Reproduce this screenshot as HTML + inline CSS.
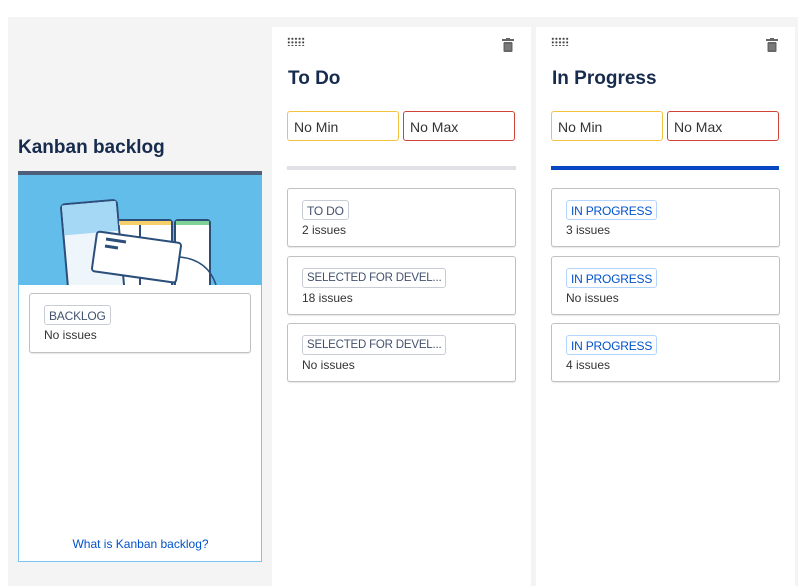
<!DOCTYPE html><html><head><style>
*{box-sizing:border-box;margin:0;padding:0}
body{width:798px;height:586px;background:#fff;font-family:"Liberation Sans",sans-serif;position:relative;overflow:hidden;color:#172b4d}
.a{position:absolute}
.gray{left:8px;top:17px;width:790px;height:569px;background:#f4f4f4}
.col{background:#fff;top:27px;height:559px;width:259px}
h2{position:absolute;font-size:19px;font-weight:bold;color:#172b4d}
.inp{position:absolute;top:111px;width:112px;height:30px;border:1px solid;border-radius:3px;font-size:14px;padding:7px 6px;color:#333}
.card{position:absolute;left:15px;width:229px;height:59px;border:1px solid #c1c1c1;border-radius:3px;box-shadow:0 1px 1px rgba(0,0,0,.1);background:#fff}
.lz{position:absolute;left:14px;top:11px;height:20px;border:1px solid #c8ccd4;border-radius:3px;font-size:12px;padding:3px 4px;color:#42526e;white-space:nowrap;letter-spacing:-.2px}
.lz.b{color:#0052cc;border-color:#b3d4ff}
.ct{position:absolute;left:14px;top:34px;font-size:12px;color:#333}
.grip{position:absolute;left:15px;top:10px;width:18px;height:9px;background-image:radial-gradient(circle,#444 1px,transparent 1.2px);background-size:3.6px 3.6px}
</style></head><body>
<div class="a gray"></div>
<h2 style="left:18px;top:137px">Kanban backlog</h2>
<div class="a" style="left:18px;top:171px;width:244px;height:391px;border:1px solid #7cc3ee;border-top:none;background:#fff">
 <div class="a" style="left:-1px;top:0;width:244px;height:4px;background:#505f79"></div>
 <div class="a" style="left:-1px;top:4px;width:244px;height:110px;background:#62bdea;overflow:hidden">
  <svg width="244" height="110" viewBox="0 0 244 110">
   <g stroke="#2b4f7a" stroke-width="2" fill="#fff">
    <rect x="100" y="45" width="30" height="80" rx="3"/><rect x="122" y="45" width="32" height="80" rx="3"/><rect x="157" y="45" width="35" height="80" rx="3"/>
    <rect x="47" y="27" width="56" height="100" rx="4" transform="rotate(-5 75 77)" fill="#eef6fc"/>
   </g>
   <rect x="101" y="46" width="28" height="4" fill="#f6cf6a"/><rect x="123" y="46" width="30" height="4" fill="#f6cf6a"/><rect x="158" y="46" width="33" height="4" fill="#7fd296"/>
   <rect x="48" y="28" width="54" height="30" fill="#a5d8f5" transform="rotate(-5 75 77)"/>
   <rect x="76" y="62" width="85" height="40" rx="3" fill="#fff" stroke="#2b4f7a" stroke-width="2" transform="rotate(8 118 82)"/>
   <path d="M88 64 L108 67 M87 71 L100 73" stroke="#2b4f7a" stroke-width="3"/>
   <path d="M162 82 Q190 85 198 110" stroke="#2b4f7a" stroke-width="1.5" fill="none"/>
  </svg>
 </div>
 <div class="card" style="left:10px;top:122px;width:222px;height:60px"><div class="lz">BACKLOG</div><div class="ct">No issues</div></div>
 <div class="a" style="left:0;width:243px;top:366px;text-align:center;font-size:12px;color:#0052cc">What is Kanban backlog?</div>
</div>

<div class="a col" style="left:272px">
 <div class="grip"></div>
 <svg class="a" style="left:230px;top:11px" width="12" height="14" viewBox="0 0 12 14"><rect x="0" y="1" width="12" height="2" fill="#666"/><rect x="4" y="0" width="4" height="2" fill="#666"/><rect x="1.5" y="4" width="9" height="10" rx="1" fill="#666"/><path d="M4 6v6M6 6v6M8 6v6" stroke="#999" stroke-width=".8"/></svg>
</div>
<h2 style="left:288px;top:68px">To Do</h2>
<div class="inp" style="left:287px;border-color:#f5c342">No Min</div>
<div class="inp" style="left:403px;border-color:#d04437">No Max</div>
<div class="a" style="left:287px;top:166px;width:229px;height:4px;background:#dfe1e6"></div>
<div class="a" style="left:272px;top:0">
 <div class="card" style="top:188px"><div class="lz">TO DO</div><div class="ct">2 issues</div></div>
 <div class="card" style="top:256px"><div class="lz" style="font-size:11.5px">SELECTED FOR DEVEL...</div><div class="ct">18 issues</div></div>
 <div class="card" style="top:323px"><div class="lz" style="font-size:11.5px">SELECTED FOR DEVEL...</div><div class="ct">No issues</div></div>
</div>

<div class="a col" style="left:536px">
 <div class="grip"></div>
 <svg class="a" style="left:230px;top:11px" width="12" height="14" viewBox="0 0 12 14"><rect x="0" y="1" width="12" height="2" fill="#666"/><rect x="4" y="0" width="4" height="2" fill="#666"/><rect x="1.5" y="4" width="9" height="10" rx="1" fill="#666"/><path d="M4 6v6M6 6v6M8 6v6" stroke="#999" stroke-width=".8"/></svg>
</div>
<h2 style="left:552px;top:68px">In Progress</h2>
<div class="inp" style="left:551px;border-color:#f5c342">No Min</div>
<div class="inp" style="left:667px;border-color:#d04437">No Max</div>
<div class="a" style="left:551px;top:166px;width:228px;height:4px;background:#0747c4"></div>
<div class="a" style="left:536px;top:0">
 <div class="card" style="top:188px"><div class="lz b">IN PROGRESS</div><div class="ct">3 issues</div></div>
 <div class="card" style="top:256px"><div class="lz b">IN PROGRESS</div><div class="ct">No issues</div></div>
 <div class="card" style="top:323px"><div class="lz b">IN PROGRESS</div><div class="ct">4 issues</div></div>
</div>
</body></html>
